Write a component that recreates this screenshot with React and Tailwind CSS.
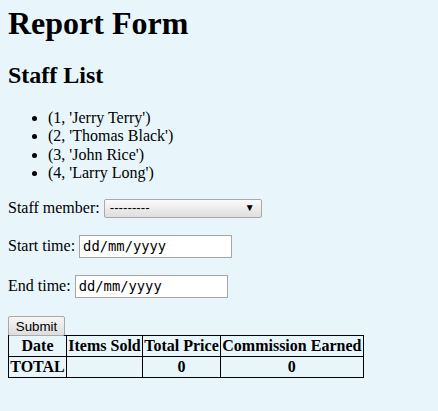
import React from 'react';

const staff = [
    [1, 'Jerry Terry'],
    [2, 'Thomas Black'],
    [3, 'John Rice'],
    [4, 'Larry Long'],
];

function DateBox() {
    return (
        <span className="inline-flex items-center w-[153px] h-[23px] bg-white border border-[#a6a6a6] pl-[3px] font-['DejaVu_Sans_Mono',monospace] text-[13.8px] text-black align-middle">
            dd/mm/yyyy
        </span>
    );
}

const cell = "border border-black px-[1.25px] py-px leading-[18.4px]";

export default function App() {
    return (
        <div className="min-h-screen w-full bg-[#e8f6fc] px-2 pt-[5px] font-['Liberation_Serif',serif] text-base text-black">
            <h1 className="text-[32px] font-bold leading-[37px]">Report Form</h1>
            <h2 className="mt-[19px] text-[24px] font-bold leading-[28px]">Staff List</h2>

            <ul className="mt-5 list-disc pl-10 leading-[18.4px]">
                {staff.map(([id, name]) => (
                    <li key={id}>({id}, '{name}')</li>
                ))}
            </ul>

            <div className="mt-4 flex items-center h-[19px]">
                <span>Staff member:</span>
                <span className="ml-1 flex items-center justify-between w-[158px] h-[19px] rounded-[2px] border border-[#a9a9a9] bg-gradient-to-b from-[#fbfbfb] to-[#dedede] pl-[5px] pr-[6px] font-['Liberation_Sans',sans-serif] text-[13.33px]">
                    <span>---------</span>
                    <span className="text-[10px] leading-none">▼</span>
                </span>
            </div>

            <div className="mt-4 flex items-center h-[24px]">
                <span>Start time:</span>
                <span className="ml-1"><DateBox /></span>
            </div>

            <div className="mt-4 flex items-center h-[24px]">
                <span>End time:</span>
                <span className="ml-1"><DateBox /></span>
            </div>

            <div className="mt-4 h-[21px]">
                <button className="w-[57px] h-[20px] rounded-[2px] border border-[#a9a9a9] bg-gradient-to-b from-[#f6f6f6] to-[#dddddd] font-['Liberation_Sans',sans-serif] text-[13.33px] text-black leading-none">
                    Submit
                </button>
            </div>

            <table className="border-collapse border border-black font-bold">
                <thead>
                    <tr>
                        <th className={cell}>Date</th>
                        <th className={cell}>Items Sold</th>
                        <th className={cell}>Total Price</th>
                        <th className={cell}>Commission Earned</th>
                    </tr>
                </thead>
                <tbody>
                    <tr>
                        <td className={cell}>TOTAL</td>
                        <td className={cell}></td>
                        <td className={cell + " text-center"}>0</td>
                        <td className={cell + " text-center"}>0</td>
                    </tr>
                </tbody>
            </table>
        </div>
    );
}
